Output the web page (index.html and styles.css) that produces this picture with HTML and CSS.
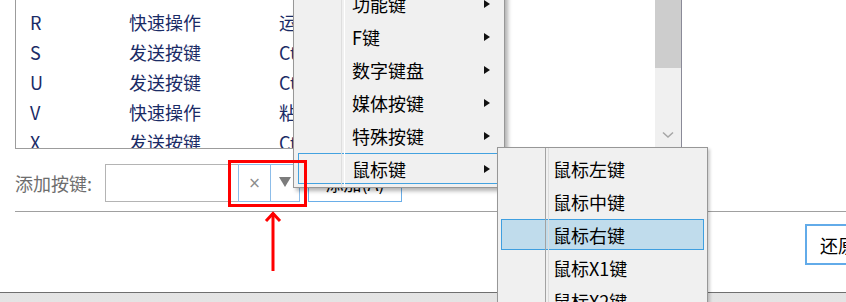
FILE: index.html
```html
<!DOCTYPE html>
<html lang="zh-CN">
<head>
    <meta charset="UTF-8">
    <meta name="viewport" content="width=device-width, initial-scale=1.0">
    <title>按键设置</title>
    <link rel="stylesheet" href="styles.css">
</head>
<body>

    <div class="window">
        <div class="key-list">
            <div class="rows">
                <div class="row"><span>R</span><span>快速操作</span><span>运行程序</span></div>
                <div class="row"><span>S</span><span>发送按键</span><span>Ctrl+S</span></div>
                <div class="row"><span>U</span><span>发送按键</span><span>Ctrl+U</span></div>
                <div class="row"><span>V</span><span>快速操作</span><span>粘贴文本</span></div>
                <div class="row"><span>X</span><span>发送按键</span><span>Ctrl+X</span></div>
            </div>
            <div class="scrollbar">
                <div class="thumb"></div>
                <div class="track"></div>
                <div class="scroll-down">
                    <svg width="12" height="8" viewBox="0 0 12 8"><path d="M1 1.5 L6 6 L11 1.5" fill="none" stroke="#a6a6a6" stroke-width="1.5"/></svg>
                </div>
            </div>
        </div>

        <div class="add-row">
            <label class="add-label">添加按键:</label>
            <div class="key-input">
                <input type="text" class="key-text">
                <button class="icon-btn clear-btn">×</button>
                <button class="icon-btn drop-btn"><span class="tri-down"></span></button>
            </div>
            <button class="btn add-btn">添加(A)</button>
        </div>

        <hr class="divider">

        <div class="actions">
            <button class="btn restore-btn">还原</button>
        </div>
    </div>

    <ul class="menu main-menu">
        <li class="menu-item"><span>功能键</span><i class="tri-right"></i></li>
        <li class="menu-item"><span>F键</span><i class="tri-right"></i></li>
        <li class="menu-item"><span>数字键盘</span><i class="tri-right"></i></li>
        <li class="menu-item"><span>媒体按键</span><i class="tri-right"></i></li>
        <li class="menu-item"><span>特殊按键</span><i class="tri-right"></i></li>
        <li class="menu-item open"><span>鼠标键</span><i class="tri-right"></i></li>
    </ul>

    <ul class="menu sub-menu">
        <li class="menu-item"><span>鼠标左键</span></li>
        <li class="menu-item"><span>鼠标中键</span></li>
        <li class="menu-item active"><span>鼠标右键</span></li>
        <li class="menu-item"><span>鼠标X1键</span></li>
        <li class="menu-item"><span>鼠标X2键</span></li>
    </ul>

    <div class="callout-box"></div>
    <svg class="callout-arrow" width="22" height="64" viewBox="0 0 22 64">
        <path d="M11 4 L11 62" stroke="#ff0000" stroke-width="3" fill="none"/>
        <path d="M4 12 L11 4.5 L18 12" stroke="#ff0000" stroke-width="3" fill="none"/>
    </svg>

</body>
</html>
```

FILE: styles.css
```css
* {
    box-sizing: border-box;
}
body {
    margin: 0;
    width: 846px;
    height: 302px;
    overflow: hidden;
    position: relative;
    background: linear-gradient(#cfcfcf, #e4e4e4);
    font-family: "Noto Sans CJK SC", "Noto Sans", sans-serif;
    font-size: 18px;
}
.window {
    height: 293px;
    background-color: #fff;
    border-bottom: 1px solid #6f6f6f;
    padding-left: 15px;
}

/* key list */
.key-list {
    display: flex;
    width: 667px;
    height: 149px;
    border: 1px solid #9c9c9c;
    border-top: none;
    border-right-color: #8a8a98;
}
.rows {
    flex: 1;
    overflow: hidden;
    padding-top: 7px;
}
.row {
    display: grid;
    grid-template-columns: 99px 150px 1fr;
    height: 30px;
    line-height: 30px;
    padding-left: 14px;
    color: #1a2b66;
    white-space: nowrap;
}
.scrollbar {
    width: 26px;
    display: flex;
    flex-direction: column;
    background-color: #f0f0f0;
}
.thumb {
    height: 68px;
    background-color: #cdcdcd;
}
.track {
    flex: 1;
}
.scroll-down {
    height: 26px;
    display: flex;
    align-items: center;
    justify-content: center;
}

/* add row */
.add-row {
    display: flex;
    align-items: center;
    margin-top: 15px;
    height: 38px;
}
.add-label {
    width: 90px;
    color: #6d6d6d;
}
.key-input {
    display: flex;
    height: 38px;
}
.key-text {
    width: 133px;
    height: 38px;
    margin: 0;
    border: 1px solid #b4b4b4;
    border-right: none;
    outline: none;
}
.icon-btn {
    margin: 0;
    padding: 0;
    height: 38px;
    border: 1px solid #8dbde9;
    background-color: #fff;
    display: flex;
    align-items: center;
    justify-content: center;
    font-family: "DejaVu Sans", sans-serif;
}
.clear-btn {
    width: 33px;
    color: #8c8c8c;
    font-size: 15px;
}
.drop-btn {
    width: 29px;
    border-left: none;
}
.tri-down {
    width: 0;
    height: 0;
    border-top: 10px solid #7c7c7c;
    border-left: 6px solid transparent;
    border-right: 6px solid transparent;
    margin-top: -3px;
}
.btn {
    font-family: inherit;
    font-size: 18px;
    color: #000;
    background-color: #fff;
    padding: 0;
}
.add-btn {
    margin-left: 8px;
    width: 94px;
    height: 38px;
    border: 1px solid #6aaee8;
}
.divider {
    margin: 9px 0 0;
    border: none;
    border-top: 1px solid #a0a0a0;
    height: 0;
}
.actions {
    display: flex;
    margin-top: 12px;
    padding-left: 790px;
}
.restore-btn {
    flex: none;
    width: 100px;
    height: 41px;
    border: 2px solid #62abe9;
    text-align: left;
    padding-left: 13px;
}

/* popup menus */
.menu {
    position: absolute;
    margin: 0;
    list-style: none;
    display: flex;
    flex-direction: column;
    background-color: #f0f0f0;
    border: 1px solid #979797;
    box-shadow: 3px 3px 4px rgba(0, 0, 0, 0.3);
}
.menu::after {
    content: "";
    position: absolute;
    top: 0;
    bottom: 0;
    left: 47px;
    width: 2px;
    pointer-events: none;
}
.main-menu {
    left: 293px;
    top: -16px;
    width: 212px;
    padding: 2px 0;
}
.main-menu::after {
    border-left: 1px solid #dedede;
    border-right: 1px solid #fff;
}
.sub-menu {
    left: 497px;
    top: 147px;
    width: 211px;
    padding: 4px 0;
    box-shadow: 2px 2px 3px rgba(0, 0, 0, 0.2);
}
.sub-menu::after {
    border-left: 1px solid #a2a2a2;
    border-right: 1px solid #dcdcdc;
}
.menu-item {
    display: flex;
    align-items: center;
    height: 31px;
    margin: 1px 4px;
    border: 1px solid transparent;
    padding-left: 53px;
    padding-right: 9px;
    color: #000;
    white-space: nowrap;
}
.menu-item span {
    flex: 1;
}
.sub-menu .menu-item {
    margin: 1px 3px;
    padding-left: 51px;
}
.menu-item.open {
    border-color: #43a2e0;
}
.menu-item.active {
    background-color: #c0dcec;
    border-color: #3f9fe0;
}
.tri-right {
    width: 0;
    height: 0;
    border-left: 6px solid #111;
    border-top: 4.5px solid transparent;
    border-bottom: 4.5px solid transparent;
}

/* red annotation */
.callout-box {
    position: absolute;
    left: 228px;
    top: 160px;
    width: 79px;
    height: 47px;
    border: 3px solid #ff0000;
}
.callout-arrow {
    position: absolute;
    left: 262px;
    top: 209px;
}
```
